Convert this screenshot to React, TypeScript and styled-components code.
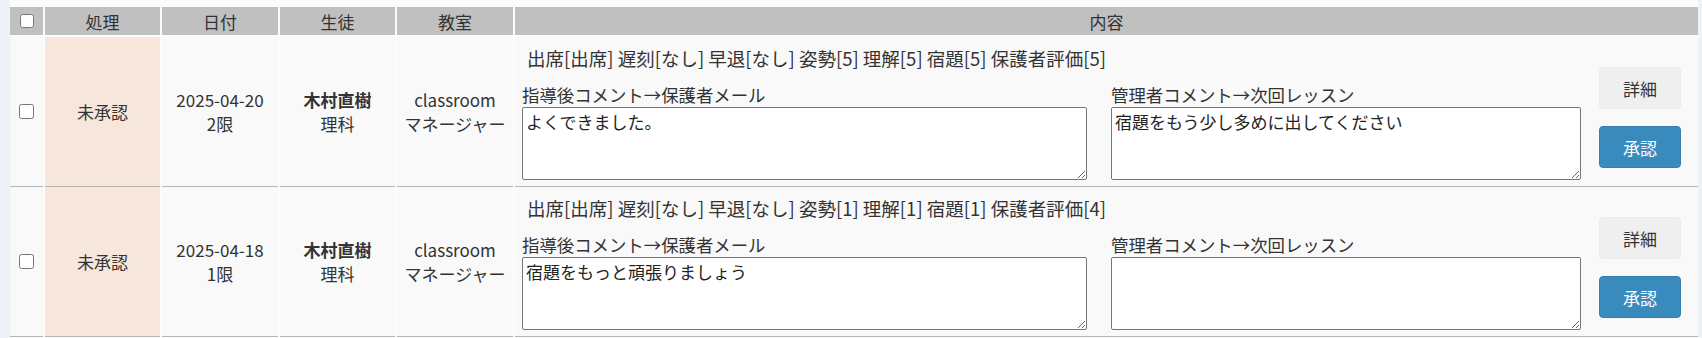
import React from 'react';
import styled, { createGlobalStyle } from 'styled-components';

const GlobalStyle = createGlobalStyle`
  body {
    margin: 0;
    background: #eef1f6;
    font-family: "Noto Sans CJK JP", "Noto Sans", sans-serif;
    color: #333;
  }
`;

interface Lesson {
  id: number;
  status: string;
  date: string;
  period: string;
  student: string;
  subject: string;
  classroom: string;
  role: string;
  summary: string;
  teacherComment: string;
  adminComment: string;
}

const lessons: Lesson[] = [
  {
    id: 1,
    status: '未承認',
    date: '2025-04-20',
    period: '2限',
    student: '木村直樹',
    subject: '理科',
    classroom: 'classroom',
    role: 'マネージャー',
    summary: '出席[出席] 遅刻[なし] 早退[なし] 姿勢[5] 理解[5] 宿題[5] 保護者評価[5]',
    teacherComment: 'よくできました。',
    adminComment: '宿題をもう少し多めに出してください',
  },
  {
    id: 2,
    status: '未承認',
    date: '2025-04-18',
    period: '1限',
    student: '木村直樹',
    subject: '理科',
    classroom: 'classroom',
    role: 'マネージャー',
    summary: '出席[出席] 遅刻[なし] 早退[なし] 姿勢[1] 理解[1] 宿題[1] 保護者評価[4]',
    teacherComment: '宿題をもっと頑張りましょう',
    adminComment: '',
  },
];

export default function App() {
  return (
    <>
      <GlobalStyle />
      <Page>
        <HeaderRow>
          <HeadCell>
            <Check type="checkbox" $size={14} />
          </HeadCell>
          <HeadCell>処理</HeadCell>
          <HeadCell>日付</HeadCell>
          <HeadCell>生徒</HeadCell>
          <HeadCell>教室</HeadCell>
          <HeadCell>内容</HeadCell>
        </HeaderRow>
        {lessons.map((lesson) => (
          <Row key={lesson.id}>
            <Cell>
              <Check type="checkbox" $size={15} />
            </Cell>
            <Cell $tone="pending">{lesson.status}</Cell>
            <Cell>
              <Stack>
                <span>{lesson.date}</span>
                <span>{lesson.period}</span>
              </Stack>
            </Cell>
            <Cell>
              <Stack>
                <StudentName>{lesson.student}</StudentName>
                <span>{lesson.subject}</span>
              </Stack>
            </Cell>
            <Cell>
              <Stack>
                <span>{lesson.classroom}</span>
                <span>{lesson.role}</span>
              </Stack>
            </Cell>
            <ContentCell>
              <Main>
                <Summary>{lesson.summary}</Summary>
                <Comments>
                  <Field>
                    <Label>指導後コメント→保護者メール</Label>
                    <CommentBox defaultValue={lesson.teacherComment} />
                  </Field>
                  <Field>
                    <Label>管理者コメント→次回レッスン</Label>
                    <CommentBox defaultValue={lesson.adminComment} />
                  </Field>
                </Comments>
              </Main>
              <Actions>
                <ActionButton>詳細</ActionButton>
                <ActionButton $primary>承認</ActionButton>
              </Actions>
            </ContentCell>
          </Row>
        ))}
      </Page>
    </>
  );
}

const columns = '33px 115px 116px 115px 116px 1fr';

const Page = styled.div`
  margin: 0 4px 0 10px;
  padding-top: 7px;
  min-height: 338px;
  box-sizing: border-box;
  background: #fcfcfc;
  font-size: 17px;
`;

const HeaderRow = styled.div`
  display: grid;
  grid-template-columns: ${columns};
  column-gap: 2px;
  margin-bottom: 2px;
`;

const HeadCell = styled.div`
  height: 28px;
  display: flex;
  align-items: center;
  justify-content: center;
  background: #c0c0c0;
  color: #333;
`;

const Row = styled.div`
  display: grid;
  grid-template-columns: ${columns};
  column-gap: 2px;
`;

const Cell = styled.div<{ $tone?: 'pending' }>`
  height: 150px;
  box-sizing: border-box;
  display: flex;
  align-items: center;
  justify-content: center;
  background: ${({ $tone }) => ($tone === 'pending' ? '#f7e6dc' : '#f9f9f9')};
  border-bottom: 1px solid #b5b5b5;
  text-align: center;
`;

const Stack = styled.div`
  display: flex;
  flex-direction: column;
  align-items: center;
  line-height: 24px;
`;

const StudentName = styled.span`
  font-weight: bold;
`;

const Check = styled.input<{ $size: number }>`
  width: ${({ $size }) => $size}px;
  height: ${({ $size }) => $size}px;
  margin: 0;
`;

const ContentCell = styled.div`
  height: 150px;
  box-sizing: border-box;
  display: flex;
  padding: 9px 12px 0 7px;
  background: #f9f9f9;
  border-bottom: 1px solid #b5b5b5;
`;

const Main = styled.div`
  display: flex;
  flex-direction: column;
`;

const Summary = styled.div`
  padding-left: 5px;
  font-size: 18.5px;
  line-height: 24px;
  white-space: nowrap;
`;

const Comments = styled.div`
  display: grid;
  grid-template-columns: 565px 470px;
  column-gap: 24px;
  margin-top: 13px;
`;

const Field = styled.div`
  display: flex;
  flex-direction: column;
`;

const Label = styled.div`
  font-size: 17.4px;
  line-height: 24px;
`;

const CommentBox = styled.textarea`
  display: block;
  width: 100%;
  height: 73px;
  box-sizing: border-box;
  margin: 0;
  padding: 2px 3px;
  border: 1px solid #767676;
  border-radius: 2px;
  background: #fff;
  color: #222;
  font: inherit;
  line-height: 24px;
`;

const Actions = styled.div`
  display: flex;
  flex-direction: column;
  gap: 17px;
  margin: 21px 0 0 18px;
`;

const ActionButton = styled.button<{ $primary?: boolean }>`
  width: 82px;
  height: 42px;
  border: 1px solid ${({ $primary }) => ($primary ? '#357fae' : '#ececec')};
  border-radius: 4px;
  background: ${({ $primary }) => ($primary ? '#3a8bbd' : '#efefef')};
  color: ${({ $primary }) => ($primary ? '#fff' : '#333')};
  font: inherit;
  cursor: pointer;
`;
